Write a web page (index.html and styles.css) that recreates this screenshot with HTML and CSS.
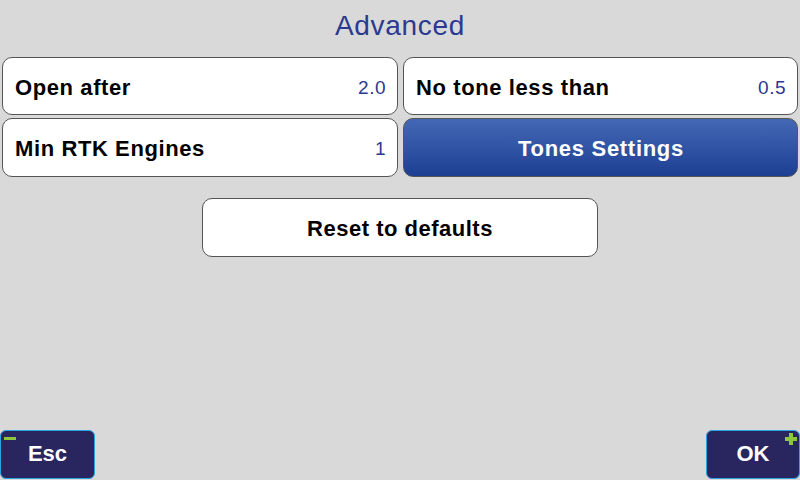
FILE: index.html
```html
<!DOCTYPE html>
<html lang="en">
  <head>
    <meta charset="UTF-8" />
    <meta name="viewport" content="width=device-width, initial-scale=1.0" />
    <title>Advanced</title>
    <link rel="stylesheet" href="styles.css">
  </head>

  <body>
    <div class="screen">
      <h2 class="title">Advanced</h2>
      <div class="grid">
        <div class="card"><span class="label">Open after</span><span class="value">2.0</span></div>
        <div class="card"><span class="label">No tone less than</span><span class="value">0.5</span></div>
        <div class="card"><span class="label">Min RTK Engines</span><span class="value">1</span></div>
        <div class="card blue">Tones Settings</div>
      </div>
      <div class="reset">Reset to defaults</div>
      <div class="spacer"></div>
      <div class="footer">
        <div class="key esc"><span class="minus"></span>Esc</div>
        <div class="key ok"><span class="plus"></span>OK</div>
      </div>
    </div>
  </body>
</html>
```
FILE: styles.css
```css
* { box-sizing : border-box; font-family : "Liberation Sans", Arial, sans-serif; }
body { margin:0; background-color:#d8d9d8; }
.screen { height:480px; display:flex; flex-direction:column; }
.title { margin:0; height:57px; padding-top:12px; line-height:28px; text-align:center; font-size:28px; font-weight:normal; letter-spacing:0.7px; color:#2b3990; }
.grid { display:grid; grid-template-columns:396px 395px; grid-template-rows:58px 59px; column-gap:5px; row-gap:3px; padding:0 2px 0 2px; }
.card { display:flex; align-items:center; justify-content:space-between; padding:3px 11px 0 12px; background:#fff; border:1px solid #555; border-radius:10px; }
.label { font-size:22px; font-weight:bold; letter-spacing:0.6px; color:#000; }
.value { font-size:19px; letter-spacing:0.5px; color:#2b3990; }
.card.blue { justify-content:center; color:#fff; font-size:22px; font-weight:bold; letter-spacing:0.7px; background:linear-gradient(#4468b5, #1d3f93); }
.reset { align-self:center; width:396px; height:59px; margin-top:21px; padding-top:3px; display:flex; align-items:center; justify-content:center; background:#fff; border:1px solid #555; border-radius:10px; font-size:22px; font-weight:bold; letter-spacing:0.5px; color:#000; }
.spacer { flex:1; }
.footer { display:flex; justify-content:space-between; margin-bottom:1px; }
.key { position:relative; height:49px; padding-bottom:2px; display:flex; align-items:center; justify-content:center; background:#29255e; border:1px solid #2aa3e3; border-radius:6px; color:#fff; font-size:22px; font-weight:bold; }
.esc { width:95px; }
.ok { width:94px; }
.minus { position:absolute; left:3px; top:6px; width:12px; height:3px; background:#8dc63f; }
.plus { position:absolute; right:2px; top:2px; width:12px; height:12px; background:linear-gradient(#8dc63f, #8dc63f) center / 12px 4px no-repeat, linear-gradient(#8dc63f, #8dc63f) center / 4px 12px no-repeat; }
```
